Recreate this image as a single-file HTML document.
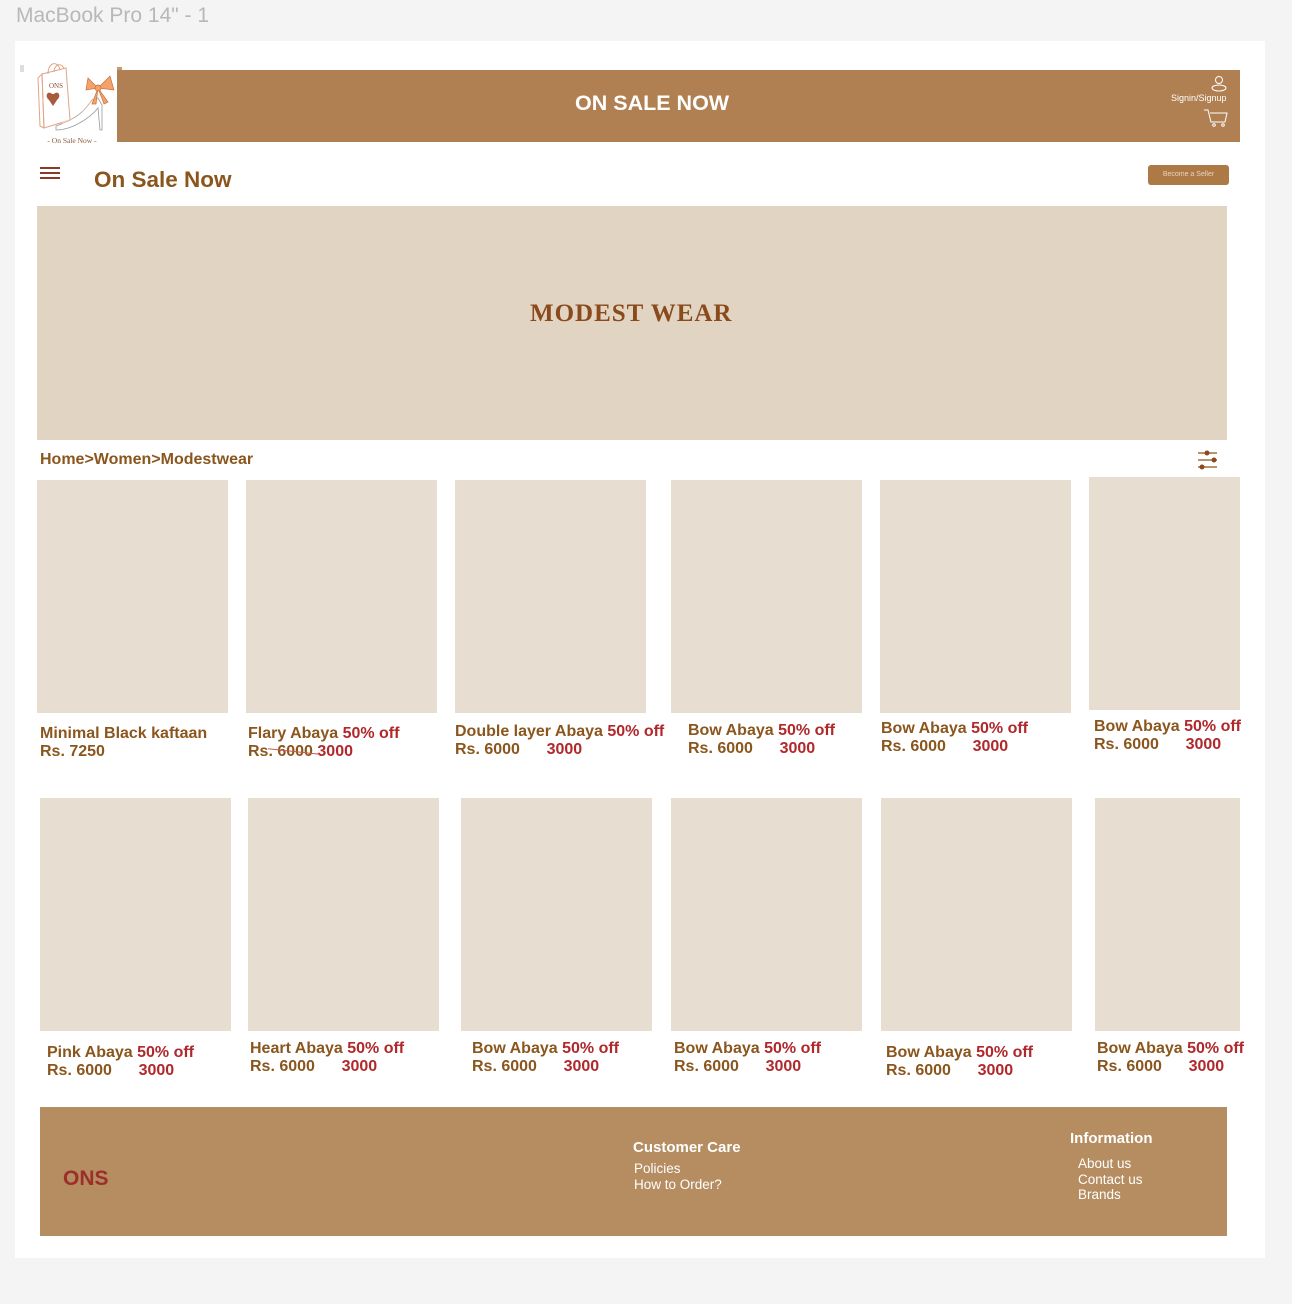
<!DOCTYPE html>
<html><head><meta charset="utf-8"><style>
*{margin:0;padding:0;box-sizing:border-box}
body{width:1292px;height:1304px;background:#f4f4f4;position:relative;overflow:hidden;font-family:"Liberation Sans",sans-serif}
.a{position:absolute}
.card{position:absolute;background:#e8ddd1}
.t{position:absolute;font-weight:bold;font-size:16px;line-height:18px;color:#8b561d;white-space:nowrap}
.r{color:#b0282b}
.fw{color:#fff}
</style></head><body>
<div class="a" style="left:16px;top:4px;font-size:21px;color:#b8b8b8">MacBook Pro 14" - 1</div>
<div class="a" style="left:15px;top:41px;width:1250px;height:1217px;background:#fff"></div>
<div class="a" style="left:20px;top:65px;width:4px;height:7px;background:#ddd"></div>
<div class="a" style="left:117px;top:67px;width:5px;height:70px;background:#c99a70"></div>
<svg class="a" style="left:32px;top:60px" width="86" height="88" viewBox="0 0 86 88">
<g fill="none" stroke="#e0a585" stroke-width="1">
<path d="M10 14 L34 8 L38 60 L12 68 Z"/><path d="M6 18 L10 14 L12 68 L8 66 Z"/>
<path d="M16 14 C16 2 26 0 28 10"/><path d="M22 12 C22 4 30 2 32 9"/>
</g>
<text x="24" y="28" font-size="7" font-family="Liberation Serif" fill="#8b4a33" text-anchor="middle">ONS</text>
<path d="M20 34 c-4-4-8 2-3 6 l4 6 4-6 c5-4 1-10-3-6z" fill="#a85a3a"/>
<path d="M24 66 C40 60 50 55 60 40 L66 38 L70 45 L70 70 L68 70 L66 48 C58 58 40 70 24 70 Z" fill="none" stroke="#999" stroke-width="0.8"/>
<path d="M30 64 C44 58 54 50 60 40 L56 44 C48 56 38 60 30 62z" fill="#f3c9ad"/>
<g fill="#f4a16a" stroke="#c8703c" stroke-width="0.7">
<path d="M66 28 L56 18 L54 30 Z"/><path d="M66 28 L78 16 L82 30 Z"/><path d="M66 28 L60 44 L64 44 Z"/><path d="M66 28 L76 42 L72 44 Z"/><circle cx="66" cy="28" r="3"/>
</g>
<text x="40" y="83" font-size="7.5" font-family="Liberation Serif" fill="#8b5a3a" text-anchor="middle">- On Sale Now -</text>
</svg>
<div class="a" style="left:117px;top:70px;width:1123px;height:72px;background:#b08052"></div>
<div class="a" style="left:575px;top:91px;font-size:21.5px;font-weight:bold;color:#fff">ON SALE NOW</div>
<svg class="a" style="left:1209px;top:75px" width="20" height="18" viewBox="0 0 20 18"><g fill="none" stroke="#fff" stroke-width="1"><circle cx="10" cy="5" r="3.5"/><ellipse cx="10" cy="13" rx="7" ry="3"/></g></svg>
<div class="a" style="left:1171px;top:93px;font-size:9px;color:#fff">Signin/Signup</div>
<svg class="a" style="left:1203px;top:108px" width="26" height="20" viewBox="0 0 26 20"><g fill="none" stroke="#fff" stroke-width="1"><path d="M1 2 L5 2 L8 14 L22 14 L24 5 L7 5"/><circle cx="11" cy="17" r="1.3"/><circle cx="20" cy="17" r="1.3"/></g></svg>
<div class="a" style="left:40px;top:167px;width:20px;height:2px;background:#8b3a2a;box-shadow:0 5px 0 #8b3a2a,0 10px 0 #8b3a2a"></div>
<div class="a" style="left:94px;top:167px;font-size:22.5px;font-weight:bold;color:#8b561d">On Sale Now</div>
<div class="a" style="left:1148px;top:165px;width:81px;height:20px;background:#ad7a45;border-radius:3px;color:#e8d3c0;font-size:7px;line-height:20px;text-align:center">Become a Seller</div>
<div class="a" style="left:37px;top:206px;width:1190px;height:234px;background:#e1d4c3"></div>
<div class="a" style="left:530px;top:300px;width:201px;text-align:center;font-family:'Liberation Serif',serif;font-weight:bold;font-size:25px;color:#8b4a1c;letter-spacing:1px;white-space:nowrap">MODEST WEAR</div>
<div class="a" style="left:40px;top:451px;font-size:16px;font-weight:bold;color:#8b561d">Home&gt;Women&gt;Modestwear</div>
<svg class="a" style="left:1198px;top:450px" width="22" height="22" viewBox="0 0 22 22"><g stroke="#8b561d" stroke-width="1.3"><line x1="0" y1="3" x2="19" y2="3"/><line x1="0" y1="10" x2="19" y2="10"/><line x1="0" y1="17" x2="19" y2="17"/></g><g fill="#8b4a1c"><circle cx="9" cy="3" r="2.5"/><circle cx="16" cy="10" r="2.5"/><circle cx="4" cy="17" r="2.5"/></g></svg>

<div class="card" style="left:37px;top:480px;width:191px;height:233px"></div>
<div class="card" style="left:246px;top:480px;width:191px;height:233px"></div>
<div class="card" style="left:455px;top:480px;width:191px;height:233px"></div>
<div class="card" style="left:671px;top:480px;width:191px;height:233px"></div>
<div class="card" style="left:880px;top:480px;width:191px;height:233px"></div>
<div class="card" style="left:1089px;top:477px;width:151px;height:233px"></div>

<div class="t" style="left:40px;top:725px">Minimal Black kaftaan<br>Rs. 7250</div>
<div class="t" style="left:248px;top:725px">Flary Abaya <span class="r">50% off</span><br>Rs. 6000 <span class="r">3000</span></div>
<div class="a" style="left:268px;top:751px;width:52px;height:1px;background:#c55;transform:rotate(6deg)"></div>
<div class="t" style="left:455px;top:723px">Double layer Abaya <span class="r">50% off</span><br>Rs. 6000 &nbsp;&nbsp;&nbsp;&nbsp;&nbsp;<span class="r">3000</span></div>
<div class="t" style="left:688px;top:722px">Bow Abaya <span class="r">50% off</span><br>Rs. 6000 &nbsp;&nbsp;&nbsp;&nbsp;&nbsp;<span class="r">3000</span></div>
<div class="t" style="left:881px;top:720px">Bow Abaya <span class="r">50% off</span><br>Rs. 6000 &nbsp;&nbsp;&nbsp;&nbsp;&nbsp;<span class="r">3000</span></div>
<div class="t" style="left:1094px;top:718px">Bow Abaya <span class="r">50% off</span><br>Rs. 6000 &nbsp;&nbsp;&nbsp;&nbsp;&nbsp;<span class="r">3000</span></div>

<div class="card" style="left:40px;top:798px;width:191px;height:233px"></div>
<div class="card" style="left:248px;top:798px;width:191px;height:233px"></div>
<div class="card" style="left:461px;top:798px;width:191px;height:233px"></div>
<div class="card" style="left:671px;top:798px;width:191px;height:233px"></div>
<div class="card" style="left:881px;top:798px;width:191px;height:233px"></div>
<div class="card" style="left:1095px;top:798px;width:145px;height:233px"></div>

<div class="t" style="left:47px;top:1044px">Pink Abaya <span class="r">50% off</span><br>Rs. 6000 &nbsp;&nbsp;&nbsp;&nbsp;&nbsp;<span class="r">3000</span></div>
<div class="t" style="left:250px;top:1040px">Heart Abaya <span class="r">50% off</span><br>Rs. 6000 &nbsp;&nbsp;&nbsp;&nbsp;&nbsp;<span class="r">3000</span></div>
<div class="t" style="left:472px;top:1040px">Bow Abaya <span class="r">50% off</span><br>Rs. 6000 &nbsp;&nbsp;&nbsp;&nbsp;&nbsp;<span class="r">3000</span></div>
<div class="t" style="left:674px;top:1040px">Bow Abaya <span class="r">50% off</span><br>Rs. 6000 &nbsp;&nbsp;&nbsp;&nbsp;&nbsp;<span class="r">3000</span></div>
<div class="t" style="left:886px;top:1044px">Bow Abaya <span class="r">50% off</span><br>Rs. 6000 &nbsp;&nbsp;&nbsp;&nbsp;&nbsp;<span class="r">3000</span></div>
<div class="t" style="left:1097px;top:1040px">Bow Abaya <span class="r">50% off</span><br>Rs. 6000 &nbsp;&nbsp;&nbsp;&nbsp;&nbsp;<span class="r">3000</span></div>

<div class="a" style="left:40px;top:1107px;width:1187px;height:129px;background:#b58d61"></div>
<div class="a" style="left:63px;top:1167px;font-size:21px;font-weight:bold;color:#9c2e2c">ONS</div>
<div class="a fw" style="left:633px;top:1139px;font-size:15px;font-weight:bold">Customer Care</div>
<div class="a fw" style="left:634px;top:1161px;font-size:13.5px;line-height:16px">Policies<br>How to Order?</div>
<div class="a fw" style="left:1070px;top:1130px;font-size:15px;font-weight:bold">Information</div>
<div class="a fw" style="left:1078px;top:1156px;font-size:13.5px;line-height:15.5px">About us<br>Contact us<br>Brands</div>
</body></html>
